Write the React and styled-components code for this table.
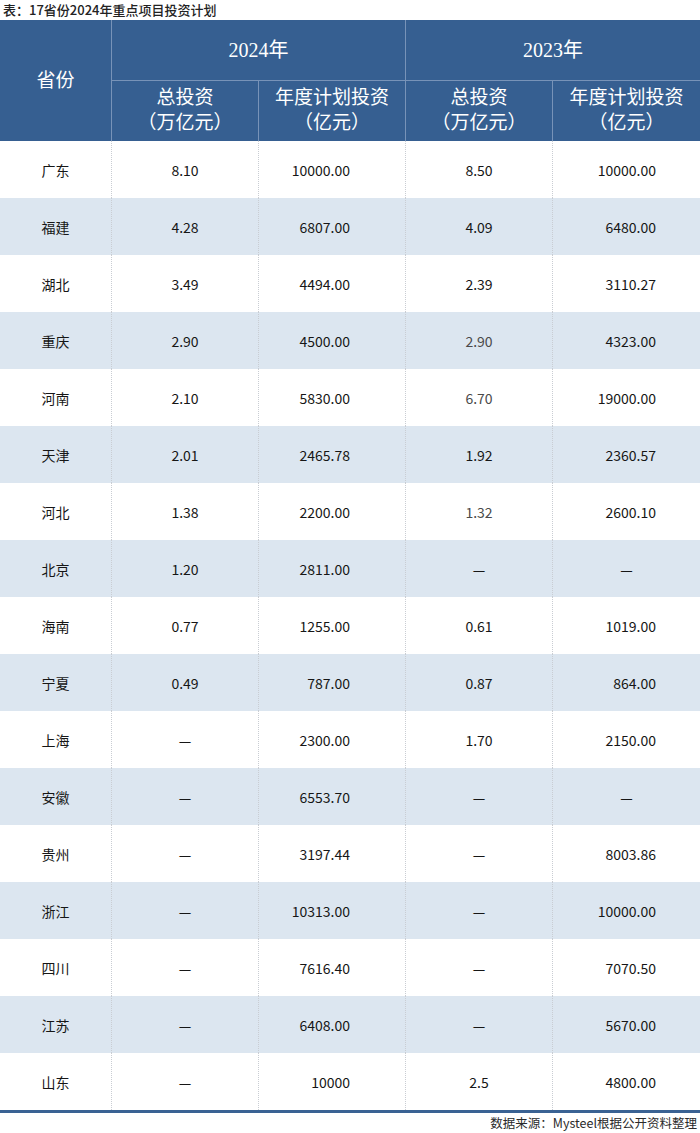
import React from "react";
import styled, { createGlobalStyle } from "styled-components";

const Global = createGlobalStyle`
  html, body { margin: 0; padding: 0; background: #ffffff; }
  body { font-family: "Noto Sans CJK SC", "Noto Sans", sans-serif; }
`;

const Page = styled.div`
  width: 700px;
  display: flex;
  flex-direction: column;
`;

const Title = styled.div`
  height: 20px;
  line-height: 20px;
  padding-left: 3px;
  font-size: 13px;
  font-weight: 500;
  color: #222;
  font-family: "Noto Sans CJK SC", sans-serif;
`;

const COLS = "111px 147px 147px 147px 148px";

const Head = styled.div`
  display: grid;
  grid-template-columns: ${COLS};
  grid-template-rows: 60px 61px;
  background: #365f91;
  color: #ffffff;
  font-family: "Liberation Serif", "Noto Sans CJK SC", serif;
  font-size: 19px;
`;

const HeadCell = styled.div`
  display: flex;
  flex-direction: column;
  align-items: center;
  justify-content: center;
  line-height: 25px;
  font-size: ${(p) => (p.$big ? "20px" : "19px")};
  grid-row: ${(p) => p.$row || "auto"};
  grid-column: ${(p) => p.$col || "auto"};
  border-left: ${(p) => (p.$noLeft ? "none" : "1px solid #7893b8")};
  border-top: ${(p) => (p.$top ? "1px solid #7893b8" : "none")};
  padding-bottom: ${(p) => (p.$top ? "2px" : "0")};
`;

const Body = styled.div`
  display: flex;
  flex-direction: column;
  border-bottom: 3px solid #3a6293;
`;

const Row = styled.div`
  display: grid;
  grid-template-columns: ${COLS};
  height: 57px;
  background: ${(p) => (p.$band ? "#dce6f0" : "#ffffff")};
`;

const Cell = styled.div`
  display: flex;
  align-items: center;
  justify-content: ${(p) => (p.$right ? "flex-end" : "center")};
  padding-right: ${(p) => (p.$right ? `${p.$right}px` : "0")};
  border-left: ${(p) => (p.$first ? "none" : "1px dotted #c9cdd3")};
  font-size: 14px;
  color: ${(p) => (p.$muted ? "#4a4a4a" : "#161616")};
  font-family: "Noto Sans CJK SC", "Noto Sans", sans-serif;
`;

const Footer = styled.div`
  text-align: right;
  padding-right: 3px;
  padding-top: 1px;
  font-size: 12.5px;
  line-height: 18px;
  color: #2a2a2a;
  font-family: "Noto Sans CJK SC", "Noto Sans", sans-serif;
`;

const D = "—";

const rows = [
  ["广东", "8.10", "10000.00", "8.50", "10000.00"],
  ["福建", "4.28", "6807.00", "4.09", "6480.00"],
  ["湖北", "3.49", "4494.00", "2.39", "3110.27"],
  ["重庆", "2.90", "4500.00", "2.90", "4323.00", true],
  ["河南", "2.10", "5830.00", "6.70", "19000.00", true],
  ["天津", "2.01", "2465.78", "1.92", "2360.57"],
  ["河北", "1.38", "2200.00", "1.32", "2600.10", true],
  ["北京", "1.20", "2811.00", D, D],
  ["海南", "0.77", "1255.00", "0.61", "1019.00"],
  ["宁夏", "0.49", "787.00", "0.87", "864.00"],
  ["上海", D, "2300.00", "1.70", "2150.00"],
  ["安徽", D, "6553.70", D, D],
  ["贵州", D, "3197.44", D, "8003.86"],
  ["浙江", D, "10313.00", D, "10000.00"],
  ["四川", D, "7616.40", D, "7070.50"],
  ["江苏", D, "6408.00", D, "5670.00"],
  ["山东", D, "10000", "2.5", "4800.00"],
];

export default function App() {
  return (
    <>
      <Global />
      <Page>
        <Title>表：17省份2024年重点项目投资计划</Title>
        <Head>
          <HeadCell $row="1 / 3" $col="1" $noLeft>省份</HeadCell>
          <HeadCell $row="1" $col="2 / 4" $big>2024年</HeadCell>
          <HeadCell $row="1" $col="4 / 6" $big>2023年</HeadCell>
          <HeadCell $row="2" $col="2" $top>
            <span>总投资</span>
            <span>（万亿元）</span>
          </HeadCell>
          <HeadCell $row="2" $col="3" $top>
            <span>年度计划投资</span>
            <span>（亿元）</span>
          </HeadCell>
          <HeadCell $row="2" $col="4" $top>
            <span>总投资</span>
            <span>（万亿元）</span>
          </HeadCell>
          <HeadCell $row="2" $col="5" $top>
            <span>年度计划投资</span>
            <span>（亿元）</span>
          </HeadCell>
        </Head>
        <Body>
          {rows.map((r, i) => (
            <Row key={r[0]} $band={i % 2 === 1}>
              <Cell $first>{r[0]}</Cell>
              <Cell>{r[1]}</Cell>
              <Cell $right={r[2] === D ? 0 : 55}>{r[2]}</Cell>
              <Cell $muted={r[5]}>{r[3]}</Cell>
              <Cell $right={r[4] === D ? 0 : 44}>{r[4]}</Cell>
            </Row>
          ))}
        </Body>
        <Footer>数据来源：Mysteel根据公开资料整理</Footer>
      </Page>
    </>
  );
}
